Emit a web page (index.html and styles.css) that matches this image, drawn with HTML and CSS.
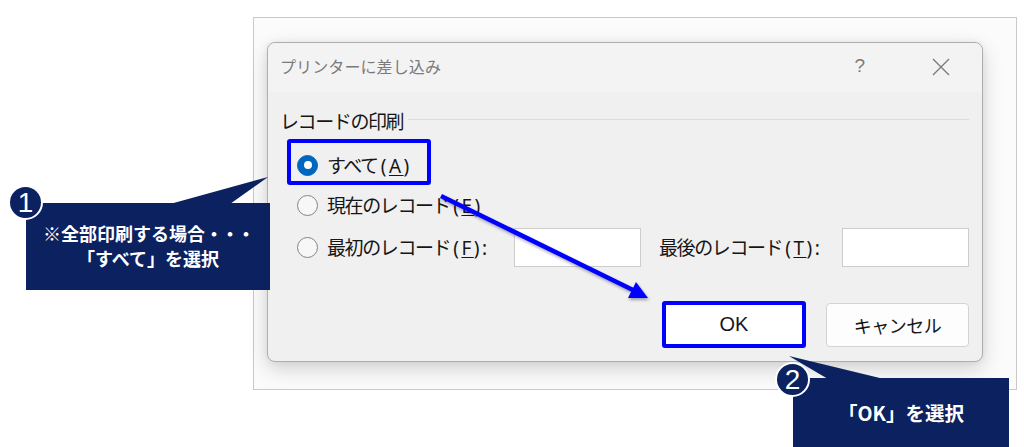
FILE: index.html
```html
<!DOCTYPE html>
<html lang="ja">
<head>
<meta charset="utf-8">
<title>プリンターに差し込み</title>
<link rel="stylesheet" href="styles.css">
</head>
<body>
<div class="stage">
  <div class="frame">
    <div class="dialog">
      <div class="titlebar">
        <span class="title">プリンターに差し込み</span>
        <span class="help">?</span>
        <svg class="close" width="18" height="18" viewBox="0 0 18 18"><path d="M1 1 L17 17 M17 1 L1 17" stroke="#7a7a7a" stroke-width="1.3" fill="none"/></svg>
      </div>
      <div class="body">
        <div class="group-label"><span>レコードの印刷</span><span class="rule"></span></div>
        <div class="radio-row r1"><span class="radio checked"></span><span class="rtext">すべて<span class="key">(<u>A</u>)</span></span></div>
        <div class="radio-row r2"><span class="radio"></span><span class="rtext">現在のレコード<span class="key">(<u>E</u>)</span></span></div>
        <div class="radio-row r3">
          <span class="radio"></span><span class="rtext lbl1">最初のレコード<span class="key">(<u>F</u>):</span></span><span class="input in1"></span>
          <span class="rtext lbl2">最後のレコード<span class="key">(<u>T</u>):</span></span><span class="input"></span>
        </div>
        <div class="buttons"><div class="btn ok">OK</div><div class="btn cancel">キャンセル</div></div>
      </div>
      <div class="highlight"></div>
    </div>
  </div>

  <svg class="arrow" width="1024" height="447" viewBox="0 0 1024 447">
    <line x1="441" y1="196" x2="633" y2="290" stroke="#0000ff" stroke-width="4.5"/>
    <polygon points="648,298 628,298 636,282" fill="#0000ff"/>
  </svg>

  <svg class="tails" width="1024" height="447" viewBox="0 0 1024 447">
    <polygon points="170,204 268,177 230,204" fill="#0c215f"/>
    <polygon points="789,356 828,379 884,379" fill="#0c215f"/>
  </svg>

  <div class="callout c1">
    <p class="l1">※全部印刷する場合<span class="dots">・・・</span></p>
    <p class="l2">「すべて」を選択</p>
  </div>
  <div class="badge b1">1</div>

  <div class="callout c2">
    <p>「OK」を選択</p>
  </div>
  <div class="badge b2">2</div>
</div>
</body>
</html>
```

FILE: styles.css
```css
html, body {
  margin: 0;
  padding: 0;
  background: #ffffff;
}

.stage {
  position: relative;
  width: 1024px;
  height: 447px;
  overflow: hidden;
  font-family: "Noto Sans CJK JP", "Noto Sans", sans-serif;
}

.frame {
  margin-left: 253px;
  margin-top: 17px;
  width: 764px;
  height: 373px;
  border: 1px solid #c9c9c9;
  background: #fbfbfb;
  padding: 24px 0 0 13px;
  box-sizing: border-box;
}

.dialog {
  position: relative;
  width: 716px;
  height: 320px;
  background: #f0f0f0;
  border: 1px solid #aeaeae;
  border-radius: 8px;
  box-sizing: border-box;
  box-shadow: 0 7px 20px rgba(0, 0, 0, 0.17), 0 0 6px rgba(0, 0, 0, 0.06);
  display: flex;
  flex-direction: column;
}

.titlebar {
  height: 49px;
  display: flex;
  align-items: center;
  padding: 0 32px 0 12px;
  background: #f3f3f3;
  border-radius: 8px 8px 0 0;
  flex: none;
}

.title {
  font-size: 16px;
  color: #7a7a7a;
  letter-spacing: 0.1px;
  flex: 1;
  margin-top: -3px;
}

.help {
  font-family: "Liberation Sans", sans-serif;
  font-size: 19px;
  color: #7a7a7a;
  margin-right: 67px;
  margin-top: -3px;
}

.close {
  display: block;
  margin-top: -2px;
}

.body {
  display: flex;
  flex-direction: column;
  padding: 17px 13px 0 12px;
  color: #161616;
  font-size: 19px;
  letter-spacing: -1.4px;
}

.group-label {
  display: flex;
  align-items: center;
  height: 24px;
  line-height: 24px;
}

.rule {
  flex: 1;
  height: 1px;
  background: #dcdcdc;
  margin-left: 5px;
  margin-top: -3px;
}

.radio-row {
  display: flex;
  align-items: center;
  padding-left: 17px;
}

.r1 { height: 30px; margin-top: 17px; }
.r2 { height: 30px; margin-top: 10px; }
.r3 { height: 39px; margin-top: 8px; }

.rtext {
  line-height: 24px;
  white-space: nowrap;
}

.key {
  font-family: "Noto Sans", sans-serif;
  letter-spacing: 2.5px;
  margin-left: 3px;
}

.key u {
  text-decoration-thickness: 1px;
  text-underline-offset: 2px;
}

.radio {
  width: 21px;
  height: 21px;
  border: 1px solid #838383;
  border-radius: 50%;
  background: #f7f7f7;
  margin-right: 9px;
  flex: none;
  box-sizing: border-box;
  display: flex;
  align-items: center;
  justify-content: center;
}

.radio.checked {
  background: #0067c0;
  border-color: #0067c0;
}

.radio.checked::after {
  content: "";
  width: 8px;
  height: 8px;
  border-radius: 50%;
  background: #ffffff;
}

.lbl1 { width: 188px; }
.lbl2 { width: 184px; }

.input {
  width: 127px;
  height: 39px;
  background: #ffffff;
  border: 1px solid #cdcdcd;
  box-sizing: border-box;
  flex: none;
}

.in1 { margin-right: 18px; }

.buttons {
  display: flex;
  justify-content: flex-end;
  align-items: center;
  gap: 20px;
  margin-top: 34px;
  letter-spacing: 0;
}

.btn {
  height: 44px;
  width: 143px;
  box-sizing: border-box;
  border: 1px solid #d3d3d3;
  border-radius: 4px;
  background: #fdfdfd;
  display: flex;
  align-items: center;
  justify-content: center;
  font-size: 18px;
  letter-spacing: -0.5px;
  color: #161616;
}

.btn.ok {
  height: 47px;
  width: 144px;
  border: 4px solid #0000ff;
  border-radius: 3px;
  background: #ffffff;
  font-family: "Liberation Sans", sans-serif;
  font-size: 20px;
  letter-spacing: 0;
}

.highlight {
  position: absolute;
  left: 19px;
  top: 96px;
  width: 144px;
  height: 46px;
  border: 4px solid #0000ff;
  border-radius: 3px;
  box-sizing: border-box;
}

.arrow {
  position: absolute;
  left: 0;
  top: 0;
  filter: drop-shadow(1px 2px 1.5px rgba(0, 0, 60, 0.35));
}

.tails {
  position: absolute;
  left: 0;
  top: 0;
}

.callout {
  position: absolute;
  background: #0c215f;
  color: #ffffff;
  font-weight: 700;
  display: flex;
  flex-direction: column;
  justify-content: center;
  align-items: center;
}

.callout p {
  margin: 0;
  white-space: nowrap;
}

.dots {
  letter-spacing: -2px;
}

.c1 {
  left: 26px;
  top: 203px;
  width: 244px;
  height: 87px;
  font-size: 18px;
  line-height: 25px;
  padding-bottom: 2px;
  box-sizing: border-box;
}

.c2 {
  left: 793px;
  top: 378px;
  width: 216px;
  height: 69px;
  font-size: 19.5px;
  line-height: 26px;
}

.badge {
  position: absolute;
  width: 35px;
  height: 35px;
  box-sizing: border-box;
  border: 2px solid #ffffff;
  border-radius: 50%;
  background: #0c215f;
  color: #ffffff;
  font-family: "Liberation Sans", sans-serif;
  font-size: 28px;
  line-height: 31px;
  text-align: center;
}

.b1 { left: 8px; top: 185px; }
.b2 { left: 775px; top: 362px; }
```
